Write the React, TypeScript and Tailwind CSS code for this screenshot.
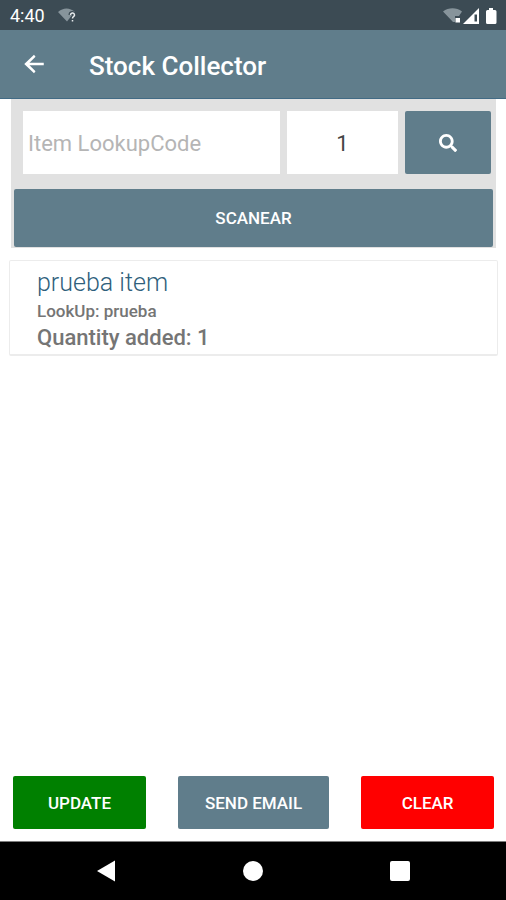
import { useState } from 'react';
import { FaSearch } from 'react-icons/fa';

const StatusBar = () => (
  <div className="flex h-[30px] items-center justify-between bg-[#3c4b54] pl-[10px] pr-2 pt-px">
    <div className="flex items-center gap-[13px]">
      <span className="text-[18px] leading-5 text-white">4:40</span>
      <svg className="h-4 w-5" viewBox="0 0 20 16" aria-hidden="true">
        <path d="M0 4C5-.7 12-.7 17 4l-2.500 2.500-5.500 7z" fill="#87949b" />
        <path d="M12.500 7a2 2 0 1 1 3 1.700c-.8.500-1 .9-1 1.800M14.500 12v1.600" fill="none" stroke="#3c4b54" strokeWidth="4" />
        <path d="M12.500 7a2 2 0 1 1 3 1.700c-.8.500-1 .9-1 1.800M14.500 12v1.600" fill="none" stroke="#e6eaec" strokeWidth="1.500" />
      </svg>
    </div>
    <svg className="h-[18px] w-[55px]" viewBox="0 0 55 18" aria-hidden="true">
      <path d="M0 4.500C5.500.3 13.500.3 19 4.500L16 9h-4v6h-2z" fill="#87949b" />
      <rect x="12.500" y="11" width="4.500" height="4.500" fill="#fff" />
      <path d="M36 1v16H20z" fill="#fff" />
      <path d="M31.500 7.500h2.500v7h-2.500z" fill="#3c4b54" />
      <path d="M46 1h4v2h2a1.500 1.500 0 0 1 1.500 1.500v11A1.500 1.500 0 0 1 52 17h-7.500a1.500 1.500 0 0 1-1.500-1.500v-11A1.500 1.500 0 0 1 44.500 3H46z" fill="#fff" />
    </svg>
  </div>
);

const Header = () => (
  <header className="flex h-[69px] items-center gap-[42px] border-b border-[#426b85] bg-[#607d8b] pl-[21px]">
    <button type="button" aria-label="Back" className="text-white">
      <svg className="h-[26px] w-[26px]" viewBox="0 0 24 24" aria-hidden="true">
        <path d="M21 10.900H7.830l5.590-5.490L12 3.500l-9 8.500 9 8.500 1.410-1.910L7.830 13.100H21z" fill="currentColor" />
      </svg>
    </button>
    <h1 className="pt-1 text-[26px] font-medium leading-8 text-white">Stock Collector</h1>
  </header>
);

const NavBar = () => (
  <nav className="grid h-[59px] grid-cols-3 items-center border-t border-[#7d7d7d] bg-black px-[33px] text-white">
    <button type="button" aria-label="Back" className="flex justify-center">
      <svg className="h-[22px] w-5" viewBox="0 0 20 22" aria-hidden="true">
        <path d="M1 11L19 .5v21z" fill="currentColor" />
      </svg>
    </button>
    <button type="button" aria-label="Home" className="flex justify-center">
      <span className="h-5 w-5 rounded-full bg-white" />
    </button>
    <button type="button" aria-label="Recent apps" className="flex justify-center">
      <span className="h-5 w-5 rounded-xs bg-white" />
    </button>
  </nav>
);

const items = [{ name: 'prueba item', code: 'prueba', quantity: 1 }];

export default function App() {
  const [code, setCode] = useState('');
  const [quantity, setQuantity] = useState('1');

  return (
    <div className="flex min-h-screen flex-col bg-white font-[Roboto,sans-serif]">
      <StatusBar />
      <Header />

      <main className="flex flex-1 flex-col pl-[9px] pr-2">
        <form className="ml-[2px] mr-[2px] bg-[#e1e1e1] px-[3px] pb-px pt-3" onSubmit={(e) => e.preventDefault()}>
          <div className="flex h-[63px] gap-[7px] pl-[9px] pr-[2px]">
            <input
              type="text"
              aria-label="Item LookupCode"
              placeholder="Item LookupCode"
              value={code}
              onChange={(e) => setCode(e.target.value)}
              className="min-w-0 flex-1 bg-white px-[5px] pt-px text-[22px] text-[#444] outline-none placeholder:text-[#b5b5b5]"
            />
            <input
              type="text"
              inputMode="numeric"
              aria-label="Quantity"
              value={quantity}
              onChange={(e) => setQuantity(e.target.value)}
              className="w-[111px] bg-white pt-px text-center text-[22px] text-[#444] outline-none"
            />
            <button type="submit" aria-label="Search" className="flex w-[86px] items-center justify-center rounded-xs bg-[#607d8b] text-white">
              <FaSearch className="h-[18px] w-[18px]" />
            </button>
          </div>
          <button type="button" className="mt-[15px] h-[58px] w-full rounded-xs bg-[#607d8b] pt-[2px] text-[17px] font-medium text-white">
            SCANEAR
          </button>
        </form>

        <ul className="mt-3">
          {items.map((item) => (
            <li key={item.code} className="rounded-xs border border-b-2 border-[#ececec] pb-[2px] pl-[27px] pt-[7px]">
              <h2 className="text-[25px] font-light leading-[30px] text-[#2f5f7c]">{item.name}</h2>
              <p className="text-[17px] font-medium leading-[26px] text-[#757575]">LookUp: {item.code}</p>
              <p className="text-[22px] font-medium leading-[28px] text-[#757575]">Quantity added: {item.quantity}</p>
            </li>
          ))}
        </ul>

        <div className="mt-auto flex gap-8 pb-3 pl-1 pr-1 text-[17px] font-medium text-white">
          <button type="button" className="h-[53px] flex-1 rounded-xs bg-[#008000] pt-[2px]">UPDATE</button>
          <button type="button" className="h-[53px] rounded-xs bg-[#607d8b] px-[27px] pt-[2px]">SEND EMAIL</button>
          <button type="button" className="h-[53px] flex-1 rounded-xs bg-[#ff0000] pt-[2px]">CLEAR</button>
        </div>
      </main>

      <NavBar />
    </div>
  );
}
